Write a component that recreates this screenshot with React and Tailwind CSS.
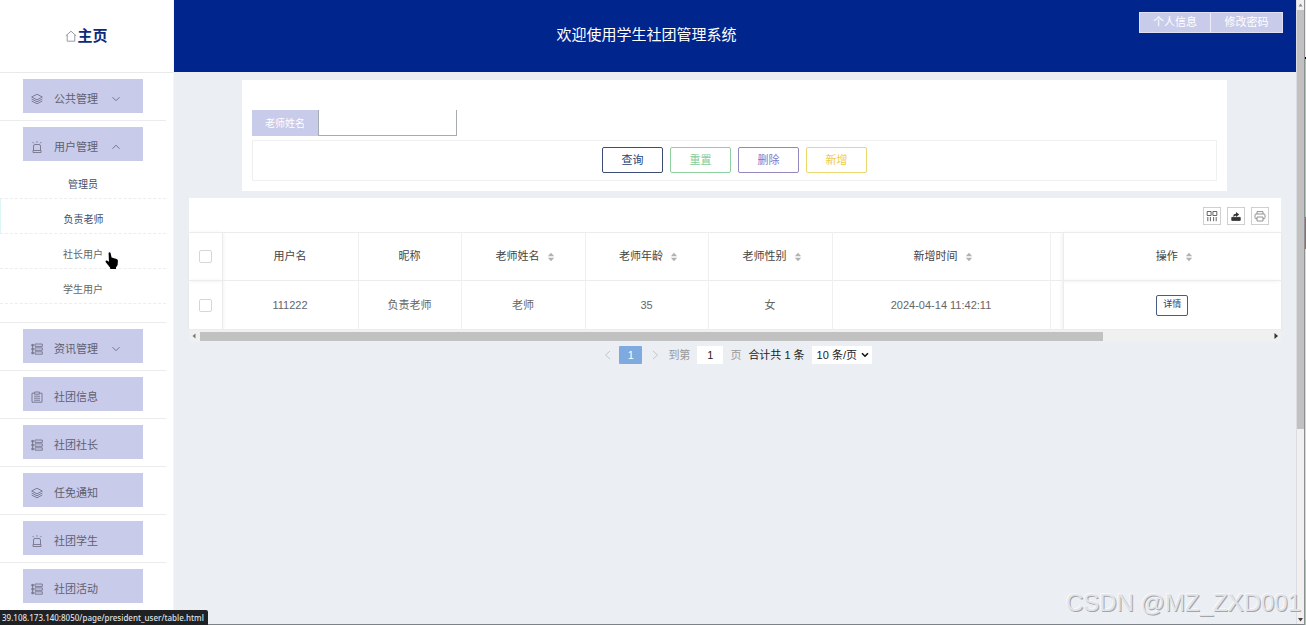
import React from 'react';

const menuItems = [
  { label: '公共管理', icon: 'layers', arrow: 'down' },
  {
    label: '用户管理',
    icon: 'siren',
    arrow: 'up',
    children: [
      { label: '管理员', dark: true },
      { label: '负责老师', dark: true, active: true },
      { label: '社长用户' },
      { label: '学生用户' },
    ],
  },
  { label: '资讯管理', icon: 'list', arrow: 'down' },
  { label: '社团信息', icon: 'clipboard' },
  { label: '社团社长', icon: 'list' },
  { label: '任免通知', icon: 'layers' },
  { label: '社团学生', icon: 'siren' },
  { label: '社团活动', icon: 'list' },
];

const columns = [
  { label: '用户名', width: 'w-[136px]' },
  { label: '昵称', width: 'w-[103px]' },
  { label: '老师姓名', width: 'w-[124px]', sort: true },
  { label: '老师年龄', width: 'w-[123px]', sort: true },
  { label: '老师性别', width: 'w-[124px]', sort: true },
  { label: '新增时间', width: 'w-[218px]', sort: true },
];

const rows = [['111222', '负责老师', '老师', '35', '女', '2024-04-14 11:42:11']];

const actions = [
  { label: '查询', style: 'border-[#3d4c74] text-[#2b3f70]' },
  { label: '重置', style: 'border-[#8fd0a0] text-[#84cc97]' },
  { label: '删除', style: 'border-[#9488bf] text-[#8576c9]' },
  { label: '新增', style: 'border-[#ecd86c] text-[#eecb4a]' },
];

const iconShapes = {
  layers: (
    <>
      <path d="M6 1.2 11.3 4 6 6.8.7 4z" />
      <path d="M.7 6 6 8.8 11.3 6" />
      <path d="M.7 8 6 10.8 11.3 8" />
    </>
  ),
  siren: (
    <>
      <path d="M2.5 9.500V5Q2.500 3.500 4 3.500h4q1.500 0 1.500 1.500v4.500" />
      <path d="M2 9.500h8v2H2zM6 .2v1.500M1.600 1l1.200 1.300M10.400 1 9.200 2.300" />
    </>
  ),
  list: (
    <>
      <path d="M4 1h7.3v2.4H4zM4 4.9h7.3v2.4H4zM4 8.8h7.3v2.4H4z" />
      <path d="M1.600 1.2v9.8M.8 1.400h1.600v1.600H.8zM.8 5.300h1.600v1.600H.8zM.8 9.200h1.600v1.600H.8z" />
    </>
  ),
  clipboard: (
    <>
      <path d="M3.4 2.2H1v9h10v-9H8.6" />
      <path d="M3.6 1h4.8v2.2H3.6zM3 5.2h6M3 7.2h6M3 9.2h6" />
    </>
  ),
};

const MenuIcon = ({ name }) => (
  <svg viewBox="0 0 12 12" className="size-3 shrink-0" fill="none" stroke="#74748c" strokeWidth="0.9">
    {iconShapes[name]}
  </svg>
);

const Chevron = ({ dir }) => (
  <svg viewBox="0 0 10 10" className="size-[10px]" fill="none" stroke="#74748c" strokeWidth="1">
    <path d={dir === 'down' ? 'M1.5 3.2 5 6.7l3.5-3.5' : 'M1.5 6.7 5 3.2l3.5 3.5'} />
  </svg>
);

const SortIcon = () => (
  <svg viewBox="0 0 8 10" className="h-[10px] w-2" fill="#b2b2b2">
    <path d="M4 .8 7.2 4.2H.8zM4 9.2.8 5.8h6.4z" />
  </svg>
);

const Sidebar = () => (
  <aside className="w-[174px] shrink-0 overflow-hidden border-r border-[#f4f5f9] bg-white">
    <a
      href="#home"
      className="flex h-[73px] items-center justify-center border-b border-[#e9e9ec] text-[15px] font-bold text-[#0c2a7c]"
    >
      <svg viewBox="0 0 12 12" className="size-3" fill="none" stroke="#8a8f9c" strokeWidth="0.9">
        <path d="M.8 5.8 6 1.2l5.2 4.6M2.2 4.8v6.4h7.6V4.8" />
      </svg>
      主页
    </a>
    <nav className="mr-[7px] text-[11px] text-[#5f5f70]">
      {menuItems.map((item) => (
        <div key={item.label} className="border-b border-[#ececec] pt-[6px] pb-[7px]">
          <button className="ml-[23px] flex h-[34px] w-[120px] items-center bg-[#c9cbea] pt-[6px] pl-2">
            <MenuIcon name={item.icon} />
            <span className="ml-[11px]">{item.label}</span>
            {item.arrow && (
              <span className="ml-[13px]">
                <Chevron dir={item.arrow} />
              </span>
            )}
          </button>
          {item.children && (
            <ul className="mt-[3px] mb-[11px] text-[10px]">
              {item.children.map((child) => (
                <li key={child.label}>
                  <a
                    href={`#${child.label}`}
                    className={`flex h-[35px] items-center justify-center border-b border-dashed border-b-[#ededed] pt-[6px] ${
                      child.dark ? 'text-[#3f4d69]' : 'text-[#666]'
                    } ${child.active ? 'border-l border-l-[#dcf6f6] [border-left-style:solid]' : ''}`}
                  >
                    {child.label}
                  </a>
                </li>
              ))}
            </ul>
          )}
        </div>
      ))}
    </nav>
  </aside>
);

const Header = () => (
  <header className="flex h-[72px] items-start bg-[#00258d] text-white">
    <h1 className="flex-1 self-center pr-5 pb-[2px] text-center text-[15px]">欢迎使用学生社团管理系统</h1>
    <div className="mt-3 mr-[13px] flex border border-[#dfe0f4] bg-[#c9cbea] text-[11px]">
      <button className="h-[19px] w-[71px] border-r border-[#eeeefa]">个人信息</button>
      <button className="h-[19px] w-[71px]">修改密码</button>
    </div>
  </header>
);

const SearchPanel = () => (
  <section className="mr-[69px] ml-[68px] mt-2 bg-white px-[10px] pt-[30px] pb-[10px]">
    <div className="flex h-[26px]">
      <label htmlFor="teacher" className="flex w-[66px] items-center justify-center bg-[#c9cbea] text-[10px] text-white">
        老师姓名
      </label>
      <input
        id="teacher"
        type="text"
        className="w-[139px] border border-t-0 border-[#a5abb3] px-2 text-[11px] outline-none"
      />
    </div>
    <div className="mt-[4px] flex h-[41px] items-center justify-center gap-[7px] border border-[#f0f0f0] pb-px text-[11px]">
      {actions.map((action) => (
        <button key={action.label} className={`h-[26px] w-[61px] rounded-[2px] border ${action.style}`}>
          {action.label}
        </button>
      ))}
    </div>
  </section>
);

const ToolButton = ({ label, children }) => (
  <button aria-label={label} className="flex size-[18px] items-center justify-center border border-[#d0d0d0]">
    <svg viewBox="0 0 12 12" className="size-3" fill="none" stroke="#555" strokeWidth="0.9">
      {children}
    </svg>
  </button>
);

const CheckBox = ({ label }) => (
  <input
    type="checkbox"
    aria-label={label}
    className="block size-[13px] mx-auto appearance-none rounded-[2px] border border-[#d6d6d6] bg-white"
  />
);

const HScrollbar = () => (
  <div className="flex h-3 items-center bg-[#f0f0f1] px-px">
    <svg viewBox="0 0 8 8" className="size-[8px]" fill="#777">
      <path d="M5.5 1.5v5L2.500 4z" />
    </svg>
    <div className="mx-[2px] h-[9px] flex-1">
      <div className="h-full w-[84.4%] bg-[#c1c1c1]" />
    </div>
    <svg viewBox="0 0 8 8" className="size-[8px]" fill="#333">
      <path d="M2.5 1v6L6 4z" />
    </svg>
  </div>
);

const DataTable = () => (
  <section className="mx-[15px] mt-[7px] bg-white">
    <div className="flex h-[34px] items-center justify-end gap-[6px] pt-[2px] pr-3">
      <ToolButton label="筛选列">
        <path d="M1.2 1.5h3.9v4H1.2zM6.9 1.5h3.9v4H6.9zM1.8 7v4.2M4.4 7v4.2M7.6 7v4.2M10.2 7v4.2" />
      </ToolButton>
      <ToolButton label="导出">
        <path d="M1.8 7.400h8.400v3H1.800z" fill="#333" stroke="#333" />
        <path d="M3.200 6.800Q3.200 3.900 6 3.700V2L9.200 4.500 6 7V5.500z" fill="#333" stroke="none" />
      </ToolButton>
      <ToolButton label="打印">
        <path d="M3 4V1.6h6V4M3 8.6H1.8Q1 8.6 1 7.8V5Q1 4 2 4h8q1 0 1 1v2.8q0 .8-.8.8H9M3 7h6v4H3z" stroke="#888" />
      </ToolButton>
    </div>
    <table className="w-full table-fixed border-collapse text-center text-[11px] text-[#666]">
      <thead>
        <tr className="h-[48px] border-y border-[#ececec] text-[#444]">
          <th className="w-[33px] border-r border-[#ececec] shadow-[1px_0_4px_rgba(0,0,0,0.07)]">
            <CheckBox label="全选" />
          </th>
          {columns.map((col) => (
            <th key={col.label} className={`${col.width} border-r border-[#f0f0f0] font-normal`}>
              {col.sort ? (
                <div className="flex items-center justify-center gap-[7px] pl-1">
                  {col.label}
                  <SortIcon />
                </div>
              ) : (
                col.label
              )}
            </th>
          ))}
          <th className="w-[13px]" />
          <th className="border-l border-[#ececec] font-normal shadow-[-1px_0_4px_rgba(0,0,0,0.07)]">
            <div className="flex items-center justify-center gap-[7px] pl-1">
              操作
              <SortIcon />
            </div>
          </th>
        </tr>
      </thead>
      <tbody>
        {rows.map((row) => (
          <tr key={row[0]} className="h-[49px] border-b border-[#ececec]">
            <td className="border-r border-[#ececec] shadow-[1px_0_4px_rgba(0,0,0,0.07)]">
              <CheckBox label={row[0]} />
            </td>
            {row.map((cell, i) => (
              <td key={i} className="border-r border-[#f0f0f0]">
                {cell}
              </td>
            ))}
            <td />
            <td className="border-l border-[#ececec] shadow-[-1px_0_4px_rgba(0,0,0,0.07)]">
              <button className="h-[21px] w-8 rounded-[2px] border border-[#4b5a80] text-[9px] text-[#2b3f70]">
                详情
              </button>
            </td>
          </tr>
        ))}
      </tbody>
    </table>
    <HScrollbar />
  </section>
);

const Pagination = () => (
  <div className="mt-1 flex h-[18px] items-center justify-center pl-[5px] text-[11px] text-[#222]">
    <button aria-label="上一页">
      <svg viewBox="0 0 10 10" className="size-[10px]" fill="none" stroke="#c4c6ca">
        <path d="M7 1 2.5 5 7 9" />
      </svg>
    </button>
    <button className="ml-[6px] h-[18px] w-[23px] rounded-[1px] bg-[#7eaae0] text-white">1</button>
    <button aria-label="下一页" className="ml-2">
      <svg viewBox="0 0 10 10" className="size-[10px]" fill="none" stroke="#c4c6ca">
        <path d="M3 1l4.500 4L3 9" />
      </svg>
    </button>
    <label htmlFor="page" className="ml-2 text-[#999]">
      到第
    </label>
    <input id="page" type="text" defaultValue="1" className="mx-[7px] h-[18px] w-[26px] bg-white text-center" />
    <span className="text-[#999]">页</span>
    <span className="ml-[7px]">合计共 1 条</span>
    <div className="relative ml-[7px]">
      <select aria-label="每页条数" className="block h-[18px] w-[60px] appearance-none bg-white pl-[5px]">
        <option>10 条/页</option>
      </select>
      <svg viewBox="0 0 8 8" className="pointer-events-none absolute top-[5px] right-[3px] size-2" fill="none" stroke="#111" strokeWidth="1.6">
        <path d="M1 2.2l3 3 3-3" />
      </svg>
    </div>
  </div>
);

const VScrollbar = () => (
  <div className="flex w-[10px] shrink-0">
    <div className="flex w-2 flex-col items-center border-l border-[#dcdde0] bg-[#f0f0f0]">
      <svg viewBox="0 0 7 10" className="h-[10px] w-[7px] shrink-0" fill="#888">
        <path d="M1.500 6.500h4l-2-3z" />
      </svg>
      <div className="h-[67%] w-full bg-[#c1c1c1]" />
      <svg viewBox="0 0 7 10" className="mt-auto h-[10px] w-[7px] shrink-0" fill="#444">
        <path d="M1 3h5L3.500 6.500z" />
      </svg>
    </div>
    {/* edge of the window behind */}
    <div className="flex w-[2px] flex-col border-l border-[#8d8f92] bg-[#dadada]">
      <div className="h-[57px] bg-[#e8e8e8]" />
      <div className="h-[2px] bg-black" />
      <div className="h-[158px] bg-[#a9c9a9]" />
      <div className="h-8 bg-[#8a6f66]" />
      <div className="flex-1" />
      <div className="h-[65px] bg-[#a9c9a9]" />
    </div>
  </div>
);

const App = () => (
  <div className="relative flex h-screen overflow-hidden bg-[#ebeef3] font-['Liberation_Sans','Noto_Sans_CJK_SC',sans-serif]">
    <Sidebar />
    <main className="min-w-0 flex-1">
      <Header />
      <SearchPanel />
      <DataTable />
      <Pagination />
    </main>
    <VScrollbar />

    {/* mouse pointer */}
    <svg viewBox="0 0 14 18" className="absolute top-[252px] left-[105px] h-[18px] w-[14px]" fill="#000">
      <path d="M3.600.8q1-.9 1.900 0L6.600 5.600l5 1.400q1.400.4 1.300 2l-.3 4-1.600 2.600V17H5.200v-1.200L1 10.600Q.1 9.300 1 8.600q1-.5 2.600 1.200l.3-.5z" />
    </svg>

    <div className="absolute bottom-0 left-0 right-[2px] border-b border-[#7d8288]" />
    <div className="absolute bottom-0 left-0 h-[15px] rounded-tr-[2px] bg-[#202124] pr-1 pl-[2px] font-['Noto_Sans',sans-serif] text-[8px] leading-[15px] font-medium text-[#dfe0e2]">
      39.108.173.140:8050/page/president_user/table.html
    </div>
    <div className="absolute right-[5px] bottom-2 text-[24px] leading-7 text-[#e2e4e8] [text-shadow:1px_1px_0_#a3a4a8,-1px_-1px_0_#f8f8fa]">
      CSDN @MZ_ZXD001
    </div>
  </div>
);

export default App;
